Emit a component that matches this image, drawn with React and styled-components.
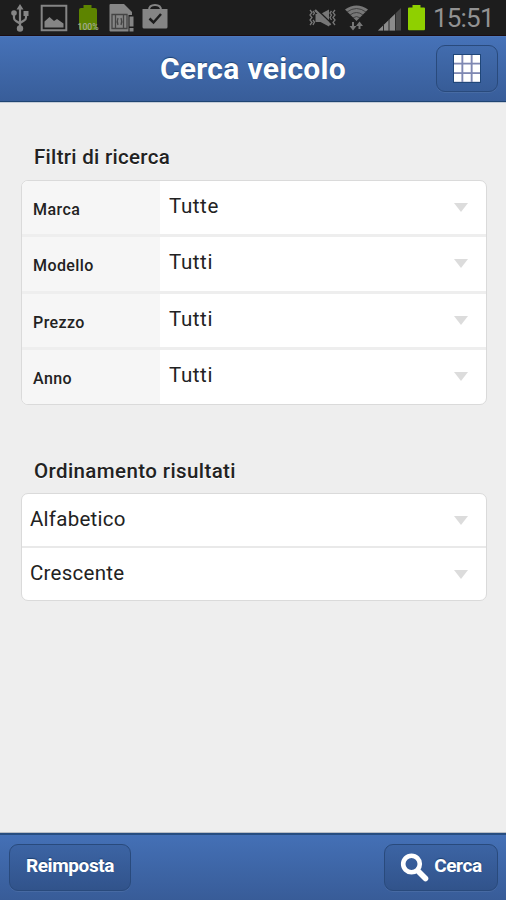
import styled, { createGlobalStyle } from "styled-components";

const GlobalStyle = createGlobalStyle`
  * {
    box-sizing: border-box;
  }
  body {
    margin: 0;
    background: #eeeeee;
    font-family: Roboto, "Liberation Sans", sans-serif;
    color: #222;
  }
`;

const Screen = styled.div`
  height: 900px;
  display: flex;
  flex-direction: column;
  overflow: hidden;
`;

const StatusBar = styled.div`
  flex: none;
  height: 36px;
  padding: 0 13px 0 8px;
  display: flex;
  align-items: flex-start;
  justify-content: space-between;
  background: #1d1d1d;
  border-bottom: 1px solid #1b0d12;

  svg {
    display: block;
  }
`;

const Clock = styled.span`
  width: 60px;
  height: 36px;
  margin-left: 5px;
  color: #929292;
  font-size: 26px;
  line-height: 36px;
  letter-spacing: -0.8px;
  white-space: nowrap;
`;

const StatusSide = styled.div`
  display: flex;
`;

const Header = styled.header`
  flex: none;
  height: 66px;
  padding: 8px 8px 0;
  display: grid;
  grid-template-columns: 62px 1fr 62px;
  background: linear-gradient(#4672b8, #385d99);
  border-top: 1px solid #4d78bc;
  border-bottom: 1px solid #1f4472;
  box-shadow: 0 1px 0 #c5cdd8;
`;

const Title = styled.h1`
  margin: 0;
  color: #fff;
  font-size: 30px;
  font-weight: 700;
  line-height: 47px;
  text-align: center;
  letter-spacing: 0.3px;
  text-shadow: 0 -1px 1px #1d4475;
`;

const BarButton = styled.button`
  width: ${(props) => props.$width}px;
  height: 47px;
  padding: 0;
  display: flex;
  align-items: center;
  justify-content: center;
  gap: 4px;
  border: 1.5px solid #294a7c;
  border-radius: 9px;
  background: ${(props) =>
    props.$light
      ? "linear-gradient(#426cae, #375c97)"
      : "linear-gradient(#3c64a4, #31538b)"};
  box-shadow: 0 1px 0 rgba(255, 255, 255, 0.07);
  color: #fff;
  font-family: inherit;
  font-size: 19px;
  font-weight: 700;
  line-height: 24px;
  letter-spacing: -0.4px;
  text-shadow: 0 -1px 1px #1d4475;
`;

const ButtonLabel = styled.span`
  margin-top: -3px;
`;

const Content = styled.main`
  flex: 1;
  padding: 43px 19px 0 21px;
`;

const SectionTitle = styled.h2`
  margin: 0 0 ${(props) => props.$gap}px 13px;
  font-size: 20.5px;
  font-weight: 500;
  line-height: 24px;
  letter-spacing: ${(props) => props.$spacing};
  text-shadow: 0 1px 0 #fff;
`;

const Card = styled.div`
  margin-bottom: ${(props) => props.$gap || 0}px;
  overflow: hidden;
  background: #fff;
  border: 1px solid #dadada;
  border-radius: 7px;
`;

const FilterRow = styled.div`
  height: 56.3px;
  display: flex;
  border-bottom: 3px solid #eeeeee;

  &:last-child {
    height: 54.1px;
    border-bottom: 0;
  }
`;

const FilterLabel = styled.label`
  width: 138px;
  padding: 17px 0 0 11px;
  background: #f6f6f6;
  font-size: 16px;
  font-weight: 500;
  line-height: 24px;
  letter-spacing: 0.42px;
`;

const Select = styled.div`
  flex: 1;
  display: flex;
  justify-content: space-between;
  padding: ${(props) => (props.$plain ? "12px 18px 0 8px" : "12px 18px 0 9px")};
  font-size: 20.5px;
  line-height: 26px;
  letter-spacing: ${(props) => (props.$plain ? "0.25px" : "0.6px")};
`;

const Arrow = styled.span`
  width: 0;
  height: 0;
  margin-top: 10px;
  border: 7px solid transparent;
  border-top: 9px solid #dcdcdc;
  border-bottom: 0;
`;

const SortRow = styled.div`
  height: 52px;
  display: flex;

  & + & {
    height: 54px;
    border-top: 2px solid #e9e9e9;
  }
`;

const Footer = styled.footer`
  flex: none;
  height: 67px;
  padding: 9px 8px 0 9px;
  display: flex;
  justify-content: space-between;
  background: linear-gradient(#4470b6, #385c98);
  border-top: 2px solid #274d80;
  box-shadow: 0 -1px 0 #b9bdc4;
`;

const filters = [
  { label: "Marca", value: "Tutte" },
  { label: "Modello", value: "Tutti" },
  { label: "Prezzo", value: "Tutti" },
  { label: "Anno", value: "Tutti" },
];

const sorting = ["Alfabetico", "Crescente"];

function NotificationIcons() {
  return (
    <svg width="166" height="35" viewBox="8 0 166 35" fill="#858585">
      {/* usb */}
      <g fill="none" stroke="#858585" strokeWidth="2.2">
        <path d="M20 8v19M14 15v3q0 2 2 3l4 2.5M26 15v2.5q0 2-2 3L20 23" />
      </g>
      <path d="M16.5 9.5 20 4l3.5 5.5zM23.5 11h5v5h-5z" />
      <circle cx="14" cy="13" r="2.8" />
      <circle cx="20" cy="28.5" r="3.2" />
      {/* gallery */}
      <path
        d="M41.7 5.7h24.6v24.6H41.7z"
        fill="none"
        stroke="#858585"
        strokeWidth="2"
      />
      <path d="M44.5 27.5v-6l5-4.5 4.5 4 3-2 6.5 4.5v4z" />
      {/* full battery */}
      <path
        d="M83.5 8V5h8v3H95q2 0 2 2v18q0 2-2 2H81q-2 0-2-2V10q0-2 2-2z"
        fill="#5d8400"
      />
      <text
        x="88"
        y="30"
        textAnchor="middle"
        fontSize="8.5"
        fontWeight="500"
        fill="#a3ab94"
        textLength="21"
        lengthAdjust="spacingAndGlyphs"
      >
        100%
      </text>
      {/* sim card */}
      <path d="M109.5 5q0-1 1-1H124l8 8v3h-3.5v16.500h-18q-1 0-1-1zM129.500 16.500h4v10h-4zM129.500 28h4v3.500h-4z" />
      <g fill="none" stroke="#444" strokeWidth="1.3">
        <path d="M112 14.500h15v14h-15zM115.500 15v13M123.500 15v13M118 18q-1.500 3.500 0 7M121 18q1.500 3.500 0 7" />
      </g>
      {/* shop bag */}
      <path
        d="M149 10q0-5 6-5t6 5"
        fill="none"
        stroke="#858585"
        strokeWidth="2"
      />
      <path d="M142.500 9h25v18q0 1.500-1.500 1.500h-22q-1.500 0-1.500-1.500z" />
      <path
        d="m149.500 18.500 4 4 7.500-8.500"
        fill="none"
        stroke="#1d1d1d"
        strokeWidth="2.500"
      />
    </svg>
  );
}

function SignalIcons() {
  return (
    <svg width="121" height="35" viewBox="307 0 121 35" fill="#777">
      {/* silent mode */}
      <path d="M315.500 14h5l8.500-4.500v17l-8.500-4.500h-5z" />
      <g fill="none" stroke="#777" strokeWidth="1.300">
        <path d="m316.500 9 14 13.500" stroke="#1d1d1d" strokeWidth="1.600" />
        <path d="m315 10 15.500 15" strokeWidth="2.400" />
        <path d="m310 10 2 2.500-2 2.500 2 2.500-2 2.500 2 2.500-2 2.500M313 11l1.500 2-1.500 2M313 20l1.500 2-1.500 3M335 10l-2 2.500 2 2.500-2 2.500 2 2.500-2 2.500 2 2.500M331.500 11l-1.500 2 1.500 2-1.500 2.500 1.500 2.500" />
      </g>
      {/* wifi */}
      <path d="m345 9.500q11.500-8 23 0L356.500 21z" />
      <g fill="none" stroke="#3b3b3b" strokeWidth="0.900">
        <path d="M347 12q9.500-7 19 0M350 15q6.500-5 13 0M353 17.800q3.500-2.500 7 0" />
      </g>
      <path d="M352 22v4h-2.500l3.500 4.500 3.500-4.500H354v-4zM358.500 29v-3H356l3.500-4.500L363 26h-2.500v3z" />
      {/* signal */}
      <path d="M378 30.500 401 8v22.500z" fill="#484848" />
      <path d="M378 30.500 395 14v16.500z" fill="#8b8b8b" />
      <path
        d="M383.500 24v7M389 19v12M395.500 13v18"
        stroke="#2b2b2b"
        strokeWidth="1"
      />
      {/* battery */}
      <path
        d="M412.500 7.500V5h8v2.500h3.500q1 0 1 1v20.500q0 1.200-1 1.200h-15q-1 0-1-1.200V8.500q0-1 1-1z"
        fill="#8fd000"
      />
    </svg>
  );
}

function GridIcon() {
  return (
    <svg width="30" height="30" viewBox="0 0 30 30">
      <path fill="#204779" d="M1 0h28v29H1z" />
      <path fill="#7f88b2" d="M2 1h26v27H2z" />
      <g fill="#fff">
        {[1, 10.5, 20].map((y) =>
          [2, 11.3, 20.6].map((x) => (
            <rect key={`${x}-${y}`} x={x} y={y} width="7.4" height="7.7" />
          ))
        )}
      </g>
    </svg>
  );
}

function SearchIcon() {
  return (
    <svg width="30" height="30" viewBox="0 0 30 30" fill="none" stroke="#fff">
      <circle cx="11.5" cy="11" r="8.3" strokeWidth="4.6" />
      <path d="m18 18 7.500 7.500" strokeWidth="5.600" strokeLinecap="round" />
    </svg>
  );
}

function App() {
  return (
    <>
      <GlobalStyle />
      <Screen>
        <StatusBar>
          <NotificationIcons />
          <StatusSide>
            <SignalIcons />
            <Clock>15:51</Clock>
          </StatusSide>
        </StatusBar>
        <Header>
          <span />
          <Title>Cerca veicolo</Title>
          <BarButton $width={62} $light aria-label="Menu">
            <GridIcon />
          </BarButton>
        </Header>
        <Content>
          <SectionTitle $gap={11} $spacing="0.3px">
            Filtri di ricerca
          </SectionTitle>
          <Card $gap={54}>
            {filters.map((filter) => (
              <FilterRow key={filter.label}>
                <FilterLabel>{filter.label}</FilterLabel>
                <Select>
                  {filter.value}
                  <Arrow />
                </Select>
              </FilterRow>
            ))}
          </Card>
          <SectionTitle $gap={10} $spacing="0.4px">
            Ordinamento risultati
          </SectionTitle>
          <Card>
            {sorting.map((option) => (
              <SortRow key={option}>
                <Select $plain>
                  {option}
                  <Arrow />
                </Select>
              </SortRow>
            ))}
          </Card>
        </Content>
        <Footer>
          <BarButton $width={122}>
            <ButtonLabel>Reimposta</ButtonLabel>
          </BarButton>
          <BarButton $width={114}>
            <SearchIcon />
            <ButtonLabel>Cerca</ButtonLabel>
          </BarButton>
        </Footer>
      </Screen>
    </>
  );
}

export default App;
